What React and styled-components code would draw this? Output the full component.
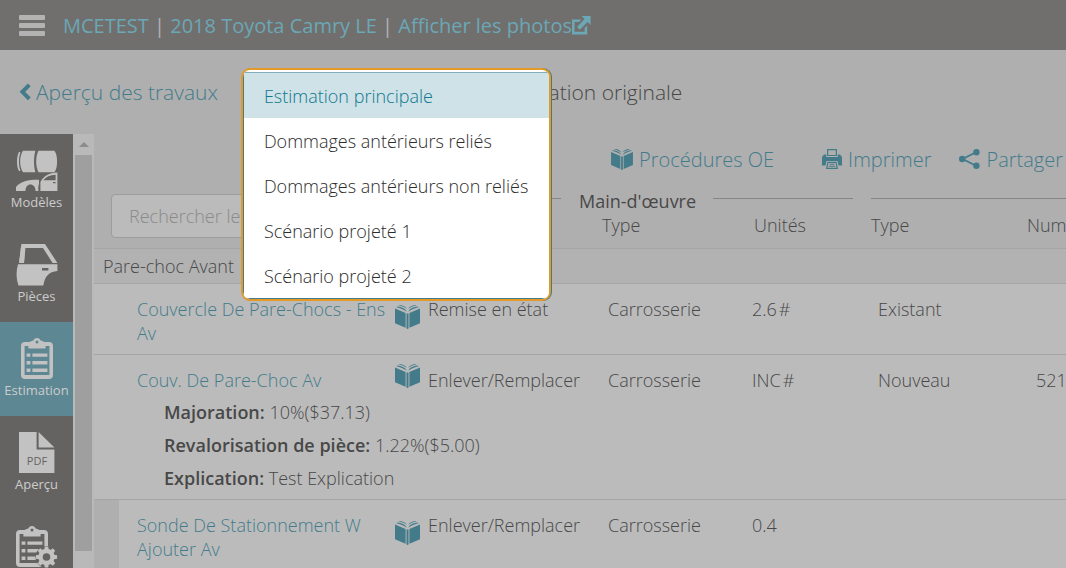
import { useState } from 'react';
import styled, { createGlobalStyle } from 'styled-components';

const colors = {
   header: '#706f6d',
   page: '#afafaf',
   row: '#bbbbbb',
   line: '#a5a5a5',
   text: '#484848',
   teal: '#437b8b',
   headerTeal: '#6ba7b5',
   sidebar: '#656361',
   icon: '#c2c2c2',
   active: '#5c8793',
   orange: '#e59a28',
};

const scenarios = [
   'Estimation principale',
   'Dommages antérieurs reliés',
   'Dommages antérieurs non reliés',
   'Scénario projeté 1',
   'Scénario projeté 2',
];

const lines = [
   {
      id: 1,
      name: 'Couvercle De Pare-Chocs - Ens Av',
      operation: 'Remise en état',
      labor: 'Carrosserie',
      units: '2.6',
      flag: '#',
      part: 'Existant',
   },
   {
      id: 2,
      name: 'Couv. De Pare-Choc Av',
      operation: 'Enlever/Remplacer',
      labor: 'Carrosserie',
      units: 'INC',
      flag: '#',
      part: 'Nouveau',
      number: '521',
      details: [
         ['Majoration:', '10%($37.13)'],
         ['Revalorisation de pièce:', '1.22%($5.00)'],
         ['Explication:', 'Test Explication'],
      ],
   },
   {
      id: 3,
      name: 'Sonde De Stationnement W Ajouter Av',
      operation: 'Enlever/Remplacer',
      labor: 'Carrosserie',
      units: '0.4',
      nested: true,
   },
];

const BookIcon = ({ width = 25, height = 24 }) => (
   <svg width={width} height={height} viewBox='0 0 25 24' fill='currentColor' aria-hidden='true'>
      <path d='M0 3.4 L10.6 8 V22.8 L0 18.2Z' />
      <path d='M25 3.4 L14.4 8 V22.8 L25 18.2Z' />
      <path d='M11.5 8.6 H13.5 V23.6 L12.5 24 L11.5 23.6Z' />
      <path d='M1.4 2.2 L2.4 1.4 C6.4 1.8 10.2 3.2 11.8 6.8 C8.6 4.2 5.4 3 1.4 2.2Z' />
      <path d='M3.6 .5 L4.8 0 C8 .3 10.4 1.4 11.8 4 C9.6 2.2 7 1.2 3.6 .5Z' />
      <path d='M23.6 2.2 L22.6 1.4 C18.6 1.8 14.8 3.2 13.2 6.8 C16.4 4.2 19.6 3 23.6 2.2Z' />
      <path d='M21.4 .5 L20.2 0 C17 .3 14.6 1.4 13.2 4 C15.4 2.2 18 1.2 21.4 .5Z' />
   </svg>
);

const PrintIcon = () => (
   <svg width='20' height='20' viewBox='0 0 20 20' fill='currentColor' aria-hidden='true'>
      <path fillRule='evenodd' d='M5 0 H15 V7 H5Z M6.2 1.2 V6 H13.8 V1.2Z' />
      <path
         fillRule='evenodd'
         d='M2 5.4 H4.2 V8 H15.8 V5.4 H18 L20 8 V16.4 H16.6 L15.4 12 H4.6 L3.4 16.4 H0 V8Z'
      />
      <path fillRule='evenodd' d='M5.4 12.8 H14.6 L16 20 H4Z M6.4 14 L5.5 18.8 H14.5 L13.6 14Z' />
      <path d='M7.6 14.8 H12.4 V15.8 H7.6Z M6.8 16.8 H13.2 V17.8 H6.8Z' />
   </svg>
);

const ShareIcon = () => (
   <svg width='21' height='20' viewBox='0 0 21 20' aria-hidden='true'>
      <path d='M17 3.2 L3.6 10 L17 16.8' fill='none' stroke='currentColor' strokeWidth='1.8' />
      <g fill='currentColor'>
         <circle cx='17.4' cy='3.2' r='3.2' />
         <circle cx='3.2' cy='10' r='3.2' />
         <circle cx='17.4' cy='16.8' r='3.2' />
      </g>
   </svg>
);

const ChevronIcon = () => (
   <svg width='12' height='18' viewBox='0 0 12 18' aria-hidden='true'>
      <path d='M10.3 1.8 L3.4 8.8 L10.3 15.8' fill='none' stroke='currentColor' strokeWidth='4' />
   </svg>
);

const ExternalIcon = () => (
   <svg width='19' height='19' viewBox='0 0 19 19' fill='currentColor' aria-hidden='true'>
      <path d='M0 3.4 H9.4 L7 6 H2.6 V15.8 H12.6 V12 L15.2 9.4 V18.4 H0Z' />
      <path d='M9.6 0 H18.6 V9 L15.6 6 L7.8 13.8 L5 11 L12.6 3Z' />
   </svg>
);

const ModelsIcon = () => (
   <svg width='42' height='42' viewBox='0 0 42 42' fill='currentColor' aria-hidden='true'>
      <path d='M3 2 C.4 6 .4 17 3 21 L4.4 21 C2.4 15 2.4 8 4.4 2Z' />
      <path d='M7 .8 H19.4 C17.6 7 17.6 16 19.4 22.2 H7 C3.2 17 3.2 6 7 .8Z' />
      <path d='M22.4 .8 H38.4 C42 5 42 18 38.4 22.2 H22.4 C19.4 16 19.4 7 22.4 .8Z' />
      <path d='M0 41 V37 C5 31 13 29.6 23 29.8 V34 C22 36 22.4 39 22.4 41 H19.6 C19.4 36.6 17.4 34.4 14.4 34.4 C11.4 34.4 9.6 36.8 9.4 41Z' />
      <path
         fillRule='evenodd'
         d='M24.4 41 V32 C28 26 33 22.8 41.4 22.6 V41Z M27.4 30.2 H39.6 V24.8 C34 25 30 27 27.4 30.2Z M37 32 V33.2 H39.6 V32Z'
      />
   </svg>
);

const DoorIcon = () => (
   <svg width='42' height='42' viewBox='0 0 42 42' fill='currentColor' aria-hidden='true'>
      <path
         fillRule='evenodd'
         d='M5.4 0 H29 L41.4 19 H3Z M9.4 4 L8 19 H36.6 L27 4Z'
      />
      <path
         fillRule='evenodd'
         d='M2 20.2 H41.4 V27 C33 27.4 28.4 33 27.4 41.4 H2.4 C0 34 0 27 2 20.2Z M26 24 V26.6 H32.4 V24Z'
      />
      <path d='M5 3 H9 L8 19 H3.2Z' />
   </svg>
);

const ClipboardShape = () => (
   <>
      <path
         fillRule='evenodd'
         d='M4 4 H9 C9 3.4 11 3 12.4 2.6 C13 .8 14.4 0 16 0 C17.6 0 19 .8 19.6 2.6 C21 3 23 3.4 23 4 H28 C30.6 4 32 5.6 32 8 V37 C32 39.6 30.6 41 28 41 H4 C1.4 41 0 39.6 0 37 V8 C0 5.6 1.4 4 4 4Z M3.6 8 V37 H28.4 V8 H24.6 V10.6 H7.4 V8Z M16 2.4 A1.5 1.5 0 1 0 16 5.4 A1.5 1.5 0 1 0 16 2.4Z'
      />
      <path d='M5.6 15.4 H9.4 V18.8 H5.6Z M5.6 23 H9.4 V26.4 H5.6Z M5.6 30.6 H9.4 V34 H5.6Z' />
      <path d='M11.4 15.4 H26.4 V18.8 H11.4Z M11.4 23 H26.4 V26.4 H11.4Z M11.4 30.6 H26.4 V34 H11.4Z' />
   </>
);

const EstimateIcon = () => (
   <svg width='42' height='42' viewBox='-5 0 42 42' fill='currentColor' aria-hidden='true'>
      <ClipboardShape />
   </svg>
);

const PdfIcon = () => (
   <svg width='42' height='42' viewBox='0 0 42 42' aria-hidden='true'>
      <path d='M3 0 H20.6 V17.6 H38.4 V41 H3Z' fill='currentColor' />
      <path d='M22.6 0 L38.4 15.6 H22.6Z' fill='currentColor' />
      <text x='21' y='33' textAnchor='middle' fontSize='11' fill={colors.sidebar}>
         PDF
      </text>
   </svg>
);

const SettingsIcon = () => (
   <svg width='42' height='42' viewBox='0 0 42 42' fill='currentColor' aria-hidden='true'>
      <ClipboardShape />
      <circle cx='30.5' cy='31' r='11' fill={colors.sidebar} />
      <circle cx='30.5' cy='31' r='6' fill='none' stroke='currentColor' strokeWidth='4.4' />
      {[0, 45, 90, 135, 180, 225, 270, 315].map((angle) => (
         <path
            key={angle}
            d='M28.2 24 L28.8 20.4 H32.2 L32.8 24Z'
            transform={`rotate(${angle} 30.5 31)`}
         />
      ))}
   </svg>
);

const navItems = [
   { label: 'Modèles', Icon: ModelsIcon },
   { label: 'Pièces', Icon: DoorIcon },
   { label: 'Estimation', Icon: EstimateIcon },
   { label: 'Aperçu', Icon: PdfIcon },
   { label: 'Paramètres', Icon: SettingsIcon },
];

const App = () => {
   const [scenario, setScenario] = useState(scenarios[0]);
   const [open, setOpen] = useState(true);
   const [page, setPage] = useState('Estimation');

   return (
      <Layout>
         <GlobalStyle />
         <Header>
            <MenuBtn aria-label='Menu'>
               <span />
               <span />
               <span />
            </MenuBtn>
            <Crumbs>
               <a href='#job'>MCETEST</a> | <a href='#vehicle'>2018 Toyota Camry LE</a> |{' '}
               <a href='#photos'>
                  Afficher les photos
                  <ExternalIcon />
               </a>
            </Crumbs>
         </Header>

         <SubHeader>
            <BackLink href='#jobs'>
               <ChevronIcon />
               Aperçu des travaux
            </BackLink>
            <Picker>
               <PickerBtn
                  aria-label='Estimation'
                  aria-expanded={open}
                  onClick={() => setOpen(!open)}
               >
                  {!open && scenario}
               </PickerBtn>
               {open && (
                  <PickerMenu>
                     <ul>
                        {scenarios.map((s) => (
                           <li key={s}>
                              <Option
                                 $selected={s === scenario}
                                 onClick={() => {
                                    setScenario(s);
                                    setOpen(false);
                                 }}
                              >
                                 {s}
                              </Option>
                           </li>
                        ))}
                     </ul>
                  </PickerMenu>
               )}
            </Picker>
            <Version>Estimation originale</Version>
         </SubHeader>

         <Body>
            <Sidebar>
               {navItems.map(({ label, Icon }) => (
                  <NavBtn key={label} $active={label === page} onClick={() => setPage(label)}>
                     <Icon />
                     {label}
                  </NavBtn>
               ))}
            </Sidebar>
            <ScrollTrack>
               <ScrollArrow />
               <ScrollThumb />
            </ScrollTrack>

            <Main>
               <Toolbar>
                  <ToolBtn>
                     <BookIcon width={22} height={21} />
                     Procédures OE
                  </ToolBtn>
                  <ToolBtn>
                     <PrintIcon />
                     Imprimer
                  </ToolBtn>
                  <ToolBtn $close>
                     <ShareIcon />
                     Partager
                  </ToolBtn>
               </Toolbar>

               <Table>
                  <colgroup>
                     <col width='326' />
                     <col width='150' />
                     <col width='174' />
                     <col width='118' />
                     <col width='156' />
                     <col />
                  </colgroup>
                  <thead>
                     <tr>
                        <SearchCell rowSpan='2'>
                           <Search
                              type='text'
                              aria-label='Rechercher les lignes'
                              placeholder='Rechercher les lignes'
                           />
                        </SearchCell>
                        <GroupHead>
                           <GroupTitle />
                        </GroupHead>
                        <GroupHead colSpan='2'>
                           <GroupTitle>Main-d'œuvre</GroupTitle>
                        </GroupHead>
                        <GroupHead colSpan='2'>
                           <GroupTitle />
                        </GroupHead>
                     </tr>
                     <tr>
                        <HeadCell>Opération</HeadCell>
                        <HeadCell $indent={32}>Type</HeadCell>
                        <HeadCell $indent={10}>Unités</HeadCell>
                        <HeadCell>Type</HeadCell>
                        <HeadCell>Numéro</HeadCell>
                     </tr>
                  </thead>
                  <tbody>
                     <tr>
                        <SectionCell colSpan='6'>Pare-choc Avant</SectionCell>
                     </tr>
                     {lines.map((line) => (
                        <LineRow key={line.id}>
                           <NameCell $nested={line.nested} $detailed={line.details}>
                              <NameWrap>
                                 <a href={`#line-${line.id}`}>{line.name}</a>
                                 <BookIcon />
                              </NameWrap>
                              {line.details && (
                                 <Details>
                                    {line.details.map(([label, value]) => (
                                       <p key={label}>
                                          <strong>{label}</strong> {value}
                                       </p>
                                    ))}
                                 </Details>
                              )}
                           </NameCell>
                           <Cell $indent={8}>{line.operation}</Cell>
                           <Cell $indent={38}>{line.labor}</Cell>
                           <Cell $indent={8}>
                              <Units>
                                 {line.units}
                                 {line.flag && <span>{line.flag}</span>}
                              </Units>
                           </Cell>
                           <Cell $indent={16}>{line.part}</Cell>
                           <Cell $indent={18}>{line.number}</Cell>
                        </LineRow>
                     ))}
                  </tbody>
               </Table>
            </Main>
         </Body>
      </Layout>
   );
};

export default App;

const GlobalStyle = createGlobalStyle`
   * {
      box-sizing: border-box;
   }

   body {
      margin: 0;
      font-family: 'Open Sans', 'Noto Sans', sans-serif;
      font-size: 18px;
      font-weight: 300;
      line-height: 24px;
      color: ${colors.text};
      background: ${colors.page};
   }

   a {
      color: ${colors.teal};
      text-decoration: none;
   }

   button {
      font: inherit;
      color: inherit;
      background: none;
      border: none;
      padding: 0;
      cursor: pointer;
   }

   svg {
      flex-shrink: 0;
   }
`;

const Layout = styled.div`
   display: flex;
   flex-direction: column;
   height: 100vh;
   overflow: hidden;
`;

const Header = styled.header`
   flex: none;
   display: flex;
   align-items: center;
   gap: 18px;
   height: 50px;
   padding: 0 19px;
   background: ${colors.header};
`;

const MenuBtn = styled.button`
   display: grid;
   gap: 3px;
   width: 26px;

   span {
      height: 5px;
      border-radius: 1px;
      background: #b3b3b3;
   }
`;

const Crumbs = styled.nav`
   padding-top: 2px;
   font-size: 20px;
   font-weight: 400;
   color: #b3b3b3;
   white-space: nowrap;

   a {
      color: ${colors.headerTeal};
   }

   svg {
      vertical-align: -2px;
   }
`;

const SubHeader = styled.div`
   flex: none;
   display: flex;
   align-items: center;
   height: 84px;
   padding: 0 19px;
   font-size: 21px;
`;

const BackLink = styled.a`
   display: flex;
   align-items: center;
   gap: 5px;
   margin-right: 25px;
   white-space: nowrap;
`;

const Picker = styled.div`
   display: flex;
   position: relative;
   width: 234px;
`;

const PickerBtn = styled.button`
   width: 100%;
   height: 44px;
   border-radius: 4px;
   background: #bbbbbb;
`;

const PickerMenu = styled.div`
   position: absolute;
   top: -2px;
   left: -2px;
   z-index: 10;
   width: 310px;
   padding-top: 2px;
   border: 2px solid ${colors.orange};
   border-radius: 9px;
   background: #ffffff;
   overflow: hidden;
   box-shadow: 1px 0 0 ${colors.teal};
   font-size: 18px;

   ul {
      list-style: none;
      margin: 0;
      padding: 0;
      border: 1px solid ${colors.teal};
      border-top-color: #7fb0bb;
      border-right: none;
      border-radius: 0 0 7px 7px;
   }
`;

const Option = styled.button`
   display: block;
   width: 100%;
   height: 45px;
   padding: 0 20px;
   text-align: left;
   white-space: nowrap;
   color: ${(props) => (props.$selected ? '#10788f' : '#2c2c2c')};
   background: ${(props) => (props.$selected ? '#cee2e7' : '#ffffff')};
`;

const Version = styled.span`
   margin-left: 20px;
   white-space: nowrap;
`;

const Body = styled.div`
   flex: 1;
   min-height: 0;
   display: grid;
   grid-template-columns: 73px 21px 1fr;
`;

const Sidebar = styled.nav`
   overflow: hidden;
   background: ${colors.sidebar};
`;

const NavBtn = styled.button`
   display: flex;
   flex-direction: column;
   align-items: center;
   gap: 1px;
   width: 100%;
   height: 94px;
   padding-top: 16px;
   font-size: 13px;
   font-weight: 400;
   line-height: 18px;
   color: #cccccc;
   background: ${(props) => (props.$active ? colors.active : 'transparent')};

   svg {
      color: ${colors.icon};
   }
`;

const ScrollTrack = styled.div`
   display: flex;
   flex-direction: column;
   padding: 0 2px 17px;
   background: #b9b9b9;
`;

const ScrollArrow = styled.div`
   display: grid;
   place-items: center;
   height: 21px;

   &::before {
      content: '';
      border: 5px solid transparent;
      border-top: none;
      border-bottom-color: #8c8c8c;
   }
`;

const ScrollThumb = styled.div`
   flex: 1;
   background: #9f9f9f;
`;

const Main = styled.main`
   min-width: 0;
   overflow: hidden;
`;

const Toolbar = styled.div`
   display: flex;
   justify-content: flex-end;
   height: 55px;
   padding: 14px 3px 0 0;
   font-size: 20px;
   color: ${colors.teal};
`;

const ToolBtn = styled.button`
   display: flex;
   align-items: center;
   gap: 6px;
   height: 24px;
   margin-left: ${(props) => (props.$close ? '28px' : '48px')};
   white-space: nowrap;

   svg {
      margin-bottom: 2px;
   }
`;

const Table = styled.table`
   width: 100%;
   min-width: 1124px;
   table-layout: fixed;
   border-collapse: separate;
   border-spacing: 0;
   white-space: nowrap;
`;

const SearchCell = styled.th`
   padding: 5px 0 10px 17px;
   border-bottom: 1px solid ${colors.line};
   text-align: left;
`;

const Search = styled.input`
   display: block;
   width: 290px;
   height: 44px;
   padding: 0 17px;
   border: 1px solid #9d9d9d;
   border-radius: 4px;
   background: ${colors.row};
   font: inherit;
   font-weight: 300;
   color: ${colors.text};

   &::placeholder {
      color: #8a8a8a;
   }
`;

const GroupHead = styled.th`
   padding: 0 9px;
   font-weight: 400;
`;

const GroupTitle = styled.div`
   display: flex;
   gap: 17px;
   height: 24px;

   &::after {
      content: '';
      flex: 1;
      height: 1px;
      margin-top: 9px;
      background: #858585;
   }
`;

const HeadCell = styled.th`
   padding: 0 0 11px ${(props) => props.$indent || 9}px;
   border-bottom: 1px solid ${colors.line};
   font-weight: 300;
   text-align: left;
`;

const SectionCell = styled.td`
   height: 35px;
   padding: 0 9px;
   border-bottom: 1px solid ${colors.line};
   background: #b2b2b2;
`;

const LineRow = styled.tr`
   background: ${colors.row};
`;

const Cell = styled.td`
   padding: 13px 0 9px ${(props) => props.$indent || 9}px;
   border-bottom: 1px solid ${colors.line};
   vertical-align: top;
`;

const NameCell = styled(Cell)`
   padding-left: ${(props) => (props.$nested ? '18px' : '43px')};
   padding-bottom: ${(props) => (props.$detailed ? '4px' : '9px')};
   border-left: ${(props) => (props.$nested ? `25px solid ${colors.page}` : 'none')};
`;

const NameWrap = styled.div`
   display: flex;
   align-items: center;
   justify-content: space-between;
   white-space: normal;

   svg {
      margin: -4px 0 4px;
      color: ${colors.teal};
   }
`;

const Units = styled.span`
   display: flex;
   gap: 2px;
`;

const Details = styled.div`
   padding: 4px 0 0 27px;
   white-space: nowrap;

   p {
      margin: 0;
      line-height: 33px;
   }

   strong {
      font-weight: 600;
   }
`;
